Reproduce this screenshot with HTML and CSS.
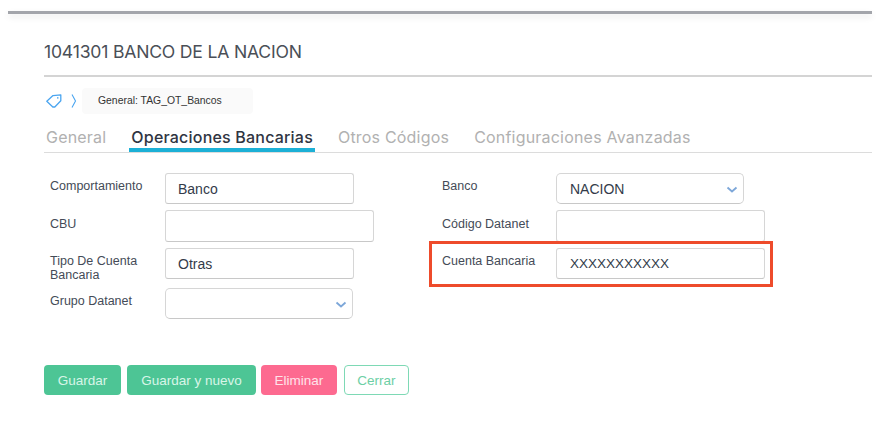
FILE: index.html
```html
<!DOCTYPE html>
<html lang="en">
<head>
    <title>Cuenta</title>
    <link rel="stylesheet" href="styles.css">
</head>
<body>
    <div class="top-line"></div>

    <div class="content">
      <h1>1041301 BANCO DE LA NACION</h1>

      <div class="crumbs">
        <svg class="tag-icon" width="16" height="14" viewBox="0 0 16 14">
          <path d="M0.8 7.3 7 1.6 14.8 0.8 14.8 6.8 8.8 13 6.8 13Z" fill="none" stroke="#4aa5f0" stroke-width="1.3" stroke-linejoin="round"/>
          <circle cx="11.8" cy="3.9" r="0.8" fill="#4aa5f0"/>
        </svg>
        <svg class="crumb-arrow" width="6" height="14" viewBox="0 0 6 14">
          <path d="M1 0.5 4.5 7 1 13.5" fill="none" stroke="#4aa5f0" stroke-width="1.1"/>
        </svg>
        <div class="chip">General: TAG_OT_Bancos</div>
      </div>

      <div class="tabs">
        <a class="tab">General</a>
        <a class="tab active">Operaciones Bancarias</a>
        <a class="tab">Otros Códigos</a>
        <a class="tab">Configuraciones Avanzadas</a>
      </div>

      <div class="form">
        <div class="column">
          <div class="row">
            <label>Comportamiento</label>
            <div class="field">Banco</div>
          </div>
          <div class="row row-wide">
            <label>CBU</label>
            <div class="field wide"></div>
          </div>
          <div class="row">
            <label>Tipo De Cuenta Bancaria</label>
            <div class="field">Otras</div>
          </div>
          <div class="row">
            <label>Grupo Datanet</label>
            <div class="field select">
              <svg class="chevron" width="12" height="7" viewBox="0 0 12 7">
                <path d="M1.5 1.5 6 5.5 10.5 1.5" fill="none" stroke="#7da7d9" stroke-width="1.8"/>
              </svg>
            </div>
          </div>
        </div>

        <div class="column column-right">
          <div class="row">
            <label>Banco</label>
            <div class="field select">NACION
              <svg class="chevron" width="12" height="7" viewBox="0 0 12 7">
                <path d="M1.5 1.5 6 5.5 10.5 1.5" fill="none" stroke="#7da7d9" stroke-width="1.8"/>
              </svg>
            </div>
          </div>
          <div class="row row-wide">
            <label>Código Datanet</label>
            <div class="field wide"></div>
          </div>
          <div class="row">
            <label>Cuenta Bancaria</label>
            <div class="field wide code">XXXXXXXXXXX</div>
            <div class="red-box"></div>
          </div>
        </div>
      </div>

      <div class="buttons">
        <button class="btn btn-green">Guardar</button>
        <button class="btn btn-green btn-long">Guardar y nuevo</button>
        <button class="btn btn-pink">Eliminar</button>
        <button class="btn btn-outline">Cerrar</button>
      </div>
    </div>
</body>
</html>
```

FILE: styles.css
```css
body {
  margin: 0;
  background-color: white;
  font-family: "Liberation Sans", Arial, sans-serif;
  color: #3c4452;
}

.top-line {
  height: 3px;
  margin: 11px 14px 0 8px;
  background-color: #a3a5ab;
  box-shadow: 0 3px 6px rgba(0, 0, 0, 0.1);
}

.content {
  margin: 0 14px 0 44px;
}

h1 {
  margin: 0;
  padding-top: 27px;
  height: 34px;
  border-bottom: 2px solid #d4d4d4;
  font-family: Inter, sans-serif;
  font-size: 17.6px;
  font-weight: 400;
  line-height: 22px;
  letter-spacing: -0.2px;
  color: #4a4f57;
}

.crumbs {
  display: flex;
  align-items: center;
  height: 26px;
  margin-top: 11px;
}

.tag-icon {
  margin-left: 2px;
}

.crumb-arrow {
  margin-left: 9px;
}

.chip {
  width: 155px;
  height: 26px;
  margin-left: 5px;
  padding-left: 16px;
  border-radius: 4px;
  background-color: #fafafa;
  font-size: 10.4px;
  line-height: 26px;
  color: #333;
}

.tabs {
  display: flex;
  height: 38px;
  border-bottom: 1px solid #dcdcdc;
}

.tab {
  height: 34px;
  margin-right: 21px;
  padding: 0 2px;
  font-family: Inter, sans-serif;
  font-size: 16px;
  line-height: 46px;
  letter-spacing: 0.2px;
  color: #b1b1b1;
}

.tab.active {
  height: 34px;
  border-bottom: 4px solid #1cb0d6;
  font-weight: 500;
  color: #2f3542;
}

.form {
  display: flex;
  margin-top: 20px;
  padding-left: 6px;
}

.column {
  width: 392px;
}

.row {
  position: relative;
  display: flex;
  margin-bottom: 6px;
}

label {
  width: 115px;
  padding: 6px 15px 0 0;
  box-sizing: border-box;
  font-size: 12.5px;
  line-height: 14px;
  color: #444b57;
}

.row-wide label {
  padding-top: 7px;
}

.column-right label {
  width: 114px;
  padding-right: 0;
}

.field {
  position: relative;
  width: 189px;
  height: 31px;
  padding-left: 12px;
  box-sizing: border-box;
  border: 1px solid #d6d6d6;
  border-bottom-color: #c8c8c8;
  border-radius: 3px;
  font-size: 14px;
  line-height: 30px;
  color: #333b4a;
}

.column-right .field {
  padding-left: 13px;
}

.field.wide {
  width: 209px;
  height: 32px;
}

.field.code {
  height: 31px;
  font-size: 13.5px;
}

.field.select {
  width: 188px;
  border-radius: 5px;
}

.chevron {
  position: absolute;
  top: 12px;
  right: 5px;
}

.red-box {
  position: absolute;
  top: -7px;
  left: -13px;
  width: 344px;
  height: 46px;
  box-sizing: border-box;
  border: 3px solid #ee4b2b;
}

.buttons {
  display: flex;
  margin-top: 40px;
}

.btn {
  width: 77px;
  height: 30px;
  margin-right: 6px;
  padding: 0;
  border: none;
  border-radius: 4px;
  font-family: "Liberation Sans", Arial, sans-serif;
  font-size: 13.5px;
  color: #d8f5e8;
}

.btn-green {
  background-color: #4dc595;
}

.btn-long {
  width: 129px;
  margin-right: 5px;
}

.btn-pink {
  width: 76px;
  margin-right: 7px;
  background-color: #fd6a90;
  color: #ffe3ea;
}

.btn-outline {
  width: 65px;
  border: 1px solid #7ed9b5;
  background-color: white;
  color: #6dcfa5;
}
```
